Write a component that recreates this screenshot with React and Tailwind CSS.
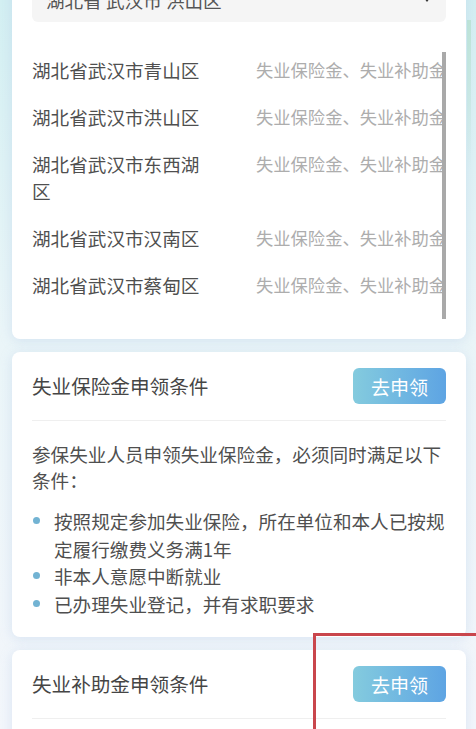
import React from 'react';

const districts = [
    '湖北省武汉市青山区',
    '湖北省武汉市洪山区',
    '湖北省武汉市东西湖区',
    '湖北省武汉市汉南区',
    '湖北省武汉市蔡甸区',
];

const insuranceRules = [
    '按照规定参加失业保险，所在单位和本人已按规定履行缴费义务满1年',
    '非本人意愿中断就业',
    '已办理失业登记，并有求职要求',
];

const subsidyRules = [
    '领取失业保险金期满仍未就业的失业人员',
    '不符合领取失业保险金条件的参保失业人员',
];

const ApplyButton = () => (
    <button className="shrink-0 w-[93px] h-[36px] rounded-[6px] bg-gradient-to-r from-[#84cbde] to-[#5ea4e3] text-white text-[19px] leading-none">
        去申领
    </button>
);

const Bullets = ({ items }) => (
    <ul className="mt-[14px]">
        {items.map((text) => (
            <li key={text} className="flex leading-[27.5px]">
                <span className="w-[22px] shrink-0 pt-[10px] pl-[1px]">
                    <span className="block w-[7px] h-[7px] rounded-full bg-[#72b3d3]" />
                </span>
                <span>{text}</span>
            </li>
        ))}
    </ul>
);

const RuleCard = ({ title, intro, items }) => (
    <div className="bg-white rounded-lg px-5 pt-4 pb-5 shadow-[0_2px_12px_rgba(170,195,230,0.35)]">
        <div className="flex items-center justify-between pb-4 border-b border-[#efefef]">
            <h3 className="text-[19.6px] text-[#454545]">{title}</h3>
            <ApplyButton />
        </div>
        <p className="mt-5 leading-[26px]">{intro}</p>
        <Bullets items={items} />
    </div>
);

export default function App() {
    return (
        <div
            className="relative w-[476px] h-[729px] overflow-hidden bg-gradient-to-b from-[#d3eff2] via-[#eaf5f8] via-45% to-[#f3f6fb] text-[18.6px] text-[#4f4f4f]"
            style={{ fontFamily: '"Noto Sans CJK SC", "Noto Sans", sans-serif' }}
        >
            {/* faint decoration on the right page edge */}
            <div className="absolute left-[467px] top-[20px] w-[4px] h-[150px] bg-gradient-to-b from-[#bfe7d6] to-transparent" />

            <div className="relative flex flex-col gap-[13px] pl-3 pr-[10px] -mt-[42px]">
                {/* service area list */}
                <div className="bg-white rounded-lg px-5 pt-5 pb-5 shadow-[0_2px_12px_rgba(170,195,230,0.35)]">
                    <div className="flex items-center justify-between h-[44px] rounded-md bg-[#f5f5f5] pl-[14px] pr-[16px] text-[#555]">
                        <span>湖北省 武汉市 洪山区</span>
                        <span className="w-0 h-0 border-x-[3px] border-x-transparent border-t-[4px] border-t-[#333]" />
                    </div>

                    <div className="relative mt-[24px] h-[273px] overflow-hidden">
                        {districts.map((name) => (
                            <div key={name} className="flex items-start py-[10px] leading-[27px]">
                                <span className="w-[184px] shrink-0">{name}</span>
                                <span className="ml-[40px] flex-1 whitespace-nowrap overflow-hidden text-[17.3px] text-[#adadad]">
                                    失业保险金、失业补助金
                                </span>
                            </div>
                        ))}
                        <div className="absolute right-0 top-[6px] bottom-0 w-[4px] bg-[#a9a9a9]" />
                    </div>
                </div>

                <RuleCard
                    title="失业保险金申领条件"
                    intro="参保失业人员申领失业保险金，必须同时满足以下条件："
                    items={insuranceRules}
                />

                <RuleCard
                    title="失业补助金申领条件"
                    intro="参保失业人员申领失业补助金，需满足以下条件之一："
                    items={subsidyRules}
                />
            </div>

            {/* highlight frame */}
            <div className="absolute left-[313px] top-[633px] w-[180px] h-[120px] border-[3px] border-[#c9464c]" />
        </div>
    );
}
